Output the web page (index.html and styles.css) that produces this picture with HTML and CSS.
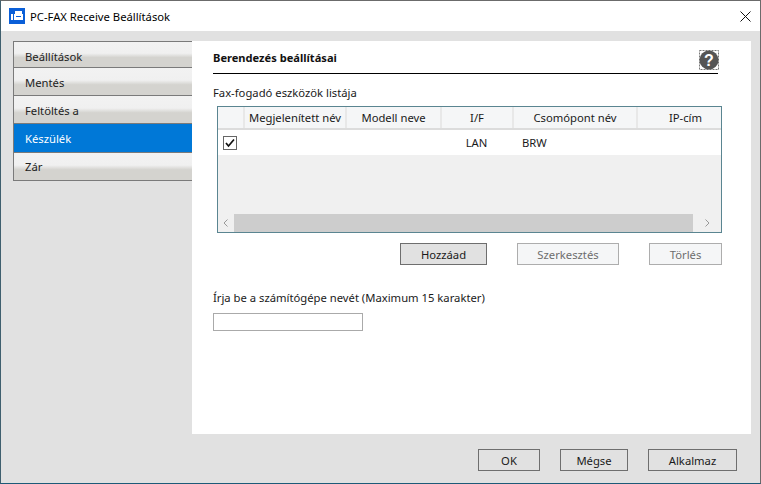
FILE: index.html
```html
<!DOCTYPE html>
<html lang="hu">
<head>
<meta charset="utf-8">
<title>PC-FAX Receive Beállítások</title>
<link rel="stylesheet" href="styles.css">
</head>
<body>
<div class="window">
  <header class="titlebar">
    <svg class="app-icon" width="16" height="16" viewBox="0 0 16 16">
      <rect width="16" height="16" fill="#0a5fd8"/>
      <rect x="6" y="3" width="7" height="3" fill="#fff"/>
      <rect x="5" y="6" width="9" height="6" fill="#fff"/>
      <rect x="2" y="6" width="2" height="6" fill="#fff"/>
      <rect x="7" y="8" width="5" height="1" fill="#0a5fd8"/>
    </svg>
    <span class="title">PC-FAX Receive Beállítások</span>
    <svg class="close" width="11" height="11" viewBox="0 0 11 11">
      <path d="M0.5 0.5L10.5 10.5M10.5 0.5L0.5 10.5" stroke="#111" stroke-width="1" fill="none"/>
    </svg>
  </header>
  <div class="body">
    <nav class="sidebar">
      <div class="nav-item first">Beállítások</div>
      <div class="nav-item mid">Mentés</div>
      <div class="nav-item mid">Feltöltés a</div>
      <div class="nav-item sel active">Készülék</div>
      <div class="nav-item last">Zár</div>
    </nav>
    <main class="panel">
      <div class="heading">
        <h1>Berendezés beállításai</h1>
        <svg class="help" width="20" height="20" viewBox="0 0 20 20">
          <rect x="0.5" y="0.5" width="19" height="19" fill="none" stroke="#777" stroke-dasharray="2 1"/>
          <circle cx="10" cy="10" r="9.5" fill="#555"/>
          <text x="10" y="15.5" class="help-mark">?</text>
        </svg>
      </div>
      <p class="label list-label">Fax-fogadó eszközök listája</p>
      <div class="list">
        <div class="list-head">
          <div class="col c0"></div>
          <div class="col c1">Megjelenített név</div>
          <div class="col c2">Modell neve</div>
          <div class="col c3">I/F</div>
          <div class="col c4">Csomópont név</div>
          <div class="col c5">IP-cím</div>
        </div>
        <div class="list-row">
          <div class="cell c0">
            <svg width="14" height="14" viewBox="0 0 14 14">
              <rect x="0.5" y="0.5" width="13" height="13" fill="#fff" stroke="#666"/>
              <path d="M3 7L5.5 10L11 3.5" fill="none" stroke="#111" stroke-width="1.7"/>
            </svg>
          </div>
          <div class="cell c1"></div>
          <div class="cell c2"></div>
          <div class="cell c3 center">LAN</div>
          <div class="cell c4 pad">BRW</div>
          <div class="cell c5"></div>
        </div>
        <div class="list-empty"></div>
        <div class="scrollbar">
          <div class="arrow"><svg width="6" height="8" viewBox="0 0 6 8"><path d="M4.5 0.5L1 4L4.5 7.5" fill="none" stroke="#999"/></svg></div>
          <div class="thumb"></div>
          <div class="arrow"><svg width="6" height="8" viewBox="0 0 6 8"><path d="M1.5 0.5L5 4L1.5 7.5" fill="none" stroke="#999"/></svg></div>
        </div>
      </div>
      <div class="list-actions">
        <button class="btn w-add">Hozzáad</button>
        <button class="btn off w-edit">Szerkesztés</button>
        <button class="btn off w-del">Törlés</button>
      </div>
      <p class="label name-label">Írja be a számítógépe nevét (Maximum 15 karakter)</p>
      <input class="name-input" type="text" aria-label="Számítógép neve">
    </main>
  </div>
  <footer class="footer">
    <button class="btn w-ok">OK</button>
    <button class="btn w-cancel">Mégse</button>
    <button class="btn w-apply">Alkalmaz</button>
  </footer>
</div>
</body>
</html>
```

FILE: styles.css
```css
* { box-sizing: border-box; }
html, body { margin: 0; padding: 0; }
body {
  width: 761px;
  height: 484px;
  overflow: hidden;
  font-family: "Noto Sans", "Open Sans", sans-serif;
  font-size: 11.25px;
  color: #1a1a1a;
}
.window {
  width: 761px;
  height: 484px;
  display: flex;
  flex-direction: column;
  background: #e1e1e1;
  border-top: 1px solid #6b6b6b;
  border-left: 1px solid #3f5f6e;
  border-right: 1px solid #6b6b6b;
  border-bottom: 1px solid #1c5a78;
}
.titlebar {
  height: 30px;
  flex: none;
  background: #fff;
  display: flex;
  align-items: center;
  padding-left: 8px;
  padding-right: 9px;
}
.title { margin-left: 5px; color: #000; }
.close { margin-left: auto; }
.body {
  height: 403px;
  flex: none;
  display: flex;
  padding: 10px 12px 0 12px;
}
.sidebar {
  width: 179px;
  height: 140px;
  flex: none;
  border: 1px solid #7a7a7a;
  border-right: 0;
  display: flex;
  flex-direction: column;
  background: #7a7a7a;
  gap: 1px;
}
.nav-item {
  flex: none;
  display: flex;
  align-items: center;
  padding-left: 11px;
  background: linear-gradient(#f2f2f2 0, #f0f0f0 45%, #d4d3cf 62%, #d4d3cf 100%);
  color: #222;
}
.first { height: 25px; padding-top: 4px; }
.mid { height: 27px; padding-top: 2px; }
.sel { height: 28px; }
.last { height: 27px; }
.nav-item.active { background: #0078d7; color: #fff; }
.panel {
  flex: 1;
  background: #fff;
  padding: 0 29px 0 21px;
  display: flex;
  flex-direction: column;
  align-items: flex-start;
}
.heading {
  width: 505px;
  height: 33px;
  flex: none;
  border-bottom: 1px solid #000;
  display: flex;
  align-items: flex-start;
  justify-content: space-between;
  padding-top: 9px;
}
h1 { margin: 0; font-size: 11.1px; font-weight: 700; color: #111; line-height: 16px; }
.help { margin-right: -1px; }
.help-mark { font-family: "Liberation Sans", sans-serif; font-size: 16px; font-weight: 700; fill: #fff; text-anchor: middle; }
.label { margin: 0; line-height: 16px; }
.list-label { margin-top: 11px; }
.list {
  margin-top: 5px;
  margin-left: 4px;
  width: 505px;
  height: 127px;
  flex: none;
  border: 1px solid #5a8591;
  display: flex;
  flex-direction: column;
  background: #f0f0f0;
}
.list-head, .list-row { display: flex; flex: none; }
.list-head {
  height: 23px;
  background: #f5f6f7;
  border-bottom: 2px solid #dcdcdc;
}
.col {
  border-right: 2px solid #e8e8e8;
  text-align: center;
  line-height: 22px;
  white-space: nowrap;
  overflow: hidden;
}
.col.c5 { border-right: 0; padding-left: 12px; }
.c0 { width: 27px; }
.c1 { width: 102px; }
.c2 { width: 95px; }
.c3 { width: 72px; }
.c4 { width: 124px; }
.c5 { flex: 1; }
.list-row { height: 25px; background: #fff; }
.cell { display: flex; align-items: center; }
.cell.c0 { padding-left: 5px; }
.center { justify-content: center; padding-right: 3px; }
.pad { padding-left: 8px; }
.list-empty { flex: 1; }
.scrollbar { height: 18px; flex: none; display: flex; align-items: stretch; }
.arrow { width: 16px; flex: none; display: flex; align-items: center; justify-content: center; }
.thumb { width: 459px; background: #cdcdcd; }
.scrollbar .arrow:last-child { flex: 1; }
.list-actions {
  margin-top: 10px;
  margin-left: 4px;
  width: 505px;
  display: flex;
  justify-content: flex-end;
}
.btn {
  height: 22px;
  padding: 0;
  font: inherit;
  color: #1a1a1a;
  background: #e1e1e1;
  border: 1px solid #6e6e6e;
  border-radius: 0;
}
.btn.off { background: #f5f6f7; border-color: #adadad; color: #6d6d6d; }
.w-add { width: 87px; margin-right: 30px; }
.w-edit { width: 102px; margin-right: 30px; }
.w-del { width: 73px; }
.name-label { margin-top: 25px; }
.name-input {
  margin-top: 7px;
  width: 150px;
  height: 18px;
  border: 1px solid #aaa;
  background: #fff;
  padding: 0;
  border-radius: 0;
}
.footer {
  flex: 1;
  display: flex;
  justify-content: flex-end;
  align-items: flex-start;
  padding: 15px 23px 0 0;
}
.w-ok { width: 62px; margin-right: 20px; }
.w-cancel { width: 68px; margin-right: 20px; }
.w-apply { width: 89px; }
```
